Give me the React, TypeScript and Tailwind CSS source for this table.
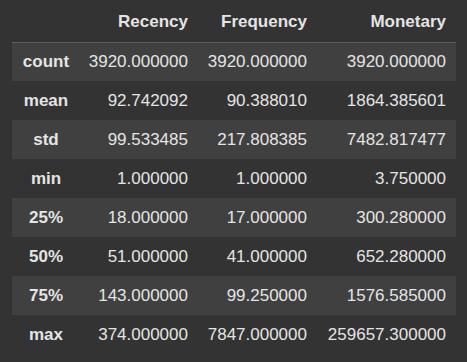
const cols = ['Recency', 'Frequency', 'Monetary'];

const rows: [string, string, string, string][] = [
  ['count', '3920.000000', '3920.000000', '3920.000000'],
  ['mean', '92.742092', '90.388010', '1864.385601'],
  ['std', '99.533485', '217.808385', '7482.817477'],
  ['min', '1.000000', '1.000000', '3.750000'],
  ['25%', '18.000000', '17.000000', '300.280000'],
  ['50%', '51.000000', '41.000000', '652.280000'],
  ['75%', '143.000000', '99.250000', '1576.585000'],
  ['max', '374.000000', '7847.000000', '259657.300000'],
];

export default function App() {
  return (
    <div className="w-[467px] h-[362px] bg-[#333333] pl-[12px] font-['Liberation_Sans',Arial,sans-serif] text-[17px] text-[#e4e4e4]">
      <table className="border-collapse table-fixed w-[444px]">
        <colgroup>
          <col className="w-[68px]" />
          <col className="w-[118px]" />
          <col className="w-[119px]" />
          <col className="w-[139px]" />
        </colgroup>
        <thead>
          <tr className="h-[42px] border-b border-[#5c5c5c]">
            <th></th>
            {cols.map(c => (
              <th key={c} className="text-right font-bold pr-[10px] pt-[2px]">{c}</th>
            ))}
          </tr>
        </thead>
        <tbody>
          {rows.map((r, i) => (
            <tr key={r[0]} className={`h-[39px] ${i % 2 === 0 ? 'bg-[#404040]' : ''}`}>
              <th className="text-center font-bold">{r[0]}</th>
              {r.slice(1).map((v, j) => (
                <td key={j} className="text-right pr-[10px] whitespace-nowrap">{v}</td>
              ))}
            </tr>
          ))}
        </tbody>
      </table>
    </div>
  );
}
